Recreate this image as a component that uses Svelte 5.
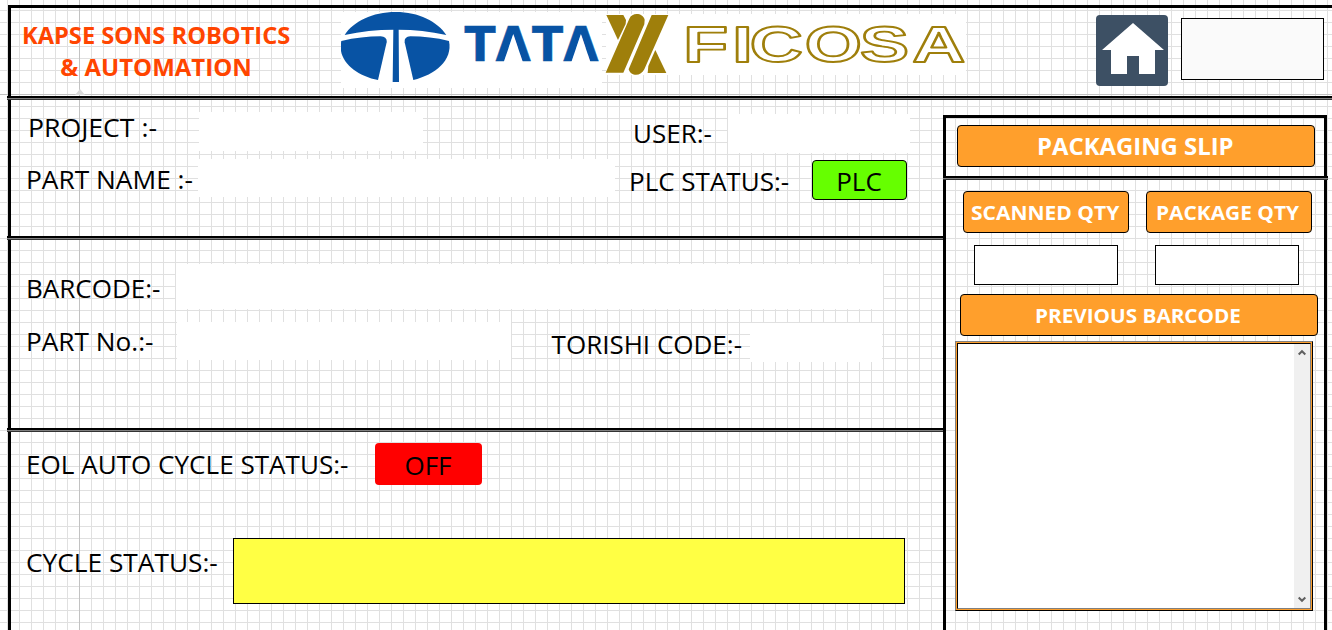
<script>
  // Scales a label horizontally so it takes the width set by the panel design.
  function fit(node, width) {
    const natural = node.offsetWidth;
    node.style.transform = `scaleX(${width / natural})`;
    node.style.marginRight = `${width - natural}px`;
  }
</script>

{#snippet label(text, width)}
  <span class="label" use:fit={width}>{text}</span>
{/snippet}

<main class="screen">
  <header class="header">
    <div class="company">
      <div><span class="name" use:fit={268}>KAPSE SONS ROBOTICS</span></div>
      <div><span class="name" use:fit={192}>&amp; AUTOMATION</span></div>
      <i class="caret"></i>
    </div>
    <svg class="tata" width="261" height="76" viewBox="341 12 261 76">
      <rect x="341" y="12" width="261" height="76" fill="#fff" />
      <g fill="#0853a4" transform="translate(330 0) scale(.33333)">
        <path d="M44 105C70 64 128 36 197 36S322 64 349 105Q276 89 206 89L207 246H188L190 89Q116 89 44 105Z" />
        <path d="M34 123Q95 109 152 109Q172 110 170 127L144 240C78 227 20 181 34 123Z" />
        <path d="M357 123Q299 109 241 109Q222 110 224 127L250 240C315 224 369 181 357 123Z" />
      </g>
      <text class="tata-word" transform="translate(464.6 61) scale(.95 1)" x="0 32.6 70.9 103.8" y="0">TATA</text>
      <path d="M513.3 34L523 62.5H503.6ZM580.9 34L590.6 62.5H571.2Z" fill="#fff" />
    </svg>
    <svg class="ficosa" width="361" height="61" viewBox="605 14 361 61">
      <rect x="606" y="14" width="360" height="61" fill="#fff" />
      <g fill="#9f7f0b" transform="translate(330 0) scale(.33333)">
        <path d="M829 45H880L888 60L887 72L864 120Z" />
        <path d="M827 218L898 56C906 36 939 38 944 59L943 73L880 218Z" />
        <path d="M896 208L965 45H1015L943 208C934 229 903 231 896 208Z" />
        <path d="M976 150L1009 219H953L955 198Z" />
      </g>
      <text class="ficosa-word" transform="translate(684 62) scale(1.47 1)" x="-.5 32.8 44.8 82.2 119.8 155.2" y="0">FICOSA</text>
    </svg>
    <button class="home" aria-label="Home">
      <svg width="72" height="71" viewBox="0 0 72 71">
        <path d="M37 8L68 35H59V59H43V41H31V59H15V35H6Z" fill="#fff" />
      </svg>
    </button>
    <div class="display"></div>
  </header>
  <div class="rule"></div>

  <div class="body">
    <div class="left">
      <section class="project">
        <div class="rows">
          <div class="row r-project">{@render label('PROJECT :-', 129)}<div class="field"></div></div>
          <div class="row r-part">{@render label('PART NAME :-', 167)}<div class="field"></div></div>
        </div>
        <div class="rows status">
          <div class="row r-user">{@render label('USER:-', 79)}<div class="field"></div></div>
          <div class="row r-plc">{@render label('PLC STATUS:-', 160)}<div class="badge plc">{@render label('PLC', 46)}</div></div>
        </div>
      </section>
      <div class="rule"></div>
      <section class="barcode">
        <div class="row r-barcode">{@render label('BARCODE:-', 134)}<div class="field"></div></div>
        <div class="row r-number">
          {@render label('PART No.:-', 127)}<div class="field"></div>
          <div class="torishi">{@render label('TORISHI CODE:-', 190)}</div>
          <div class="field code"></div>
        </div>
      </section>
      <div class="rule"></div>
      <section class="cycle">
        <div class="row r-eol">{@render label('EOL AUTO CYCLE STATUS:-', 323)}<div class="badge off">{@render label('OFF', 47)}</div></div>
        <div class="row r-cycle">{@render label('CYCLE STATUS:-', 192)}<div class="bar"></div></div>
      </section>
    </div>

    <aside class="panel">
      <div class="slip"><button class="orange big"><span use:fit={197}>PACKAGING SLIP</span></button></div>
      <div class="rule"></div>
      <div class="pair">
        <button class="orange"><span use:fit={148}>SCANNED QTY</span></button>
        <button class="orange"><span use:fit={143}>PACKAGE QTY</span></button>
      </div>
      <div class="counts"><div class="count"></div><div class="count"></div></div>
      <button class="orange previous"><span use:fit={206}>PREVIOUS BARCODE</span></button>
      <div class="list-outer"><div class="list-mid"><div class="list">
        <div class="scroll">
          <svg width="16" height="16"><path d="M4.7 9.5L8 6.2L11.3 9.5" /></svg>
          <svg width="16" height="16"><path d="M4.7 6.5L8 9.8L11.3 6.5" /></svg>
        </div>
      </div></div></div>
    </aside>
  </div>
</main>

<style>
  :global(body) { margin: 0; overflow: hidden; }
  * { box-sizing: border-box; }
  .screen {
    width: 1332px;
    height: 630px;
    padding: 5px 0 0 8px;
    overflow: hidden;
    font-family: "Open Sans", "Noto Sans", sans-serif;
    color: #000;
    background:
      linear-gradient(#c2c2c2, #c2c2c2) 79px 0 / 1px 100% no-repeat,
      linear-gradient(#c2c2c2, #c2c2c2) 0 94px / 100% 1px no-repeat,
      linear-gradient(to right, #e0e0e0 1px, transparent 1px) 7px 0 / 12px 12px,
      linear-gradient(#e0e0e0 1px, transparent 1px) 0 10px / 12px 12px,
      #fff;
  }
  .header {
    display: flex;
    align-items: flex-start;
    height: 91px;
    border-top: 3px solid #000;
    border-left: 3px solid #000;
  }
  .rule {
    height: 4px;
    margin-left: -4px;
    background: linear-gradient(#000 2px, #808080 2px, #808080 3px, #333 3px);
  }
  .header + .rule { margin-left: -1px; }
  .company {
    position: relative;
    width: 290px;
    margin-right: 40px;
    padding-top: 11px;
    color: #ff4500;
    text-align: center;
    font-size: 24px;
    font-weight: 700;
    line-height: 32px;
    white-space: nowrap;
  }
  .company > div { display: flex; justify-content: center; }
  .name, .label, .orange span { display: inline-block; flex: none; transform-origin: 0 50%; white-space: nowrap; }
  .caret {
    position: absolute;
    left: 64px;
    top: 81px;
    border: 5px solid transparent;
    border-top: 0;
    border-bottom: 6px solid #dadada;
  }
  svg { display: block; flex: none; }
  .tata { margin-top: 4px; }
  .tata-word { font: 700 48px "DejaVu Sans", sans-serif; fill: #0853a4; stroke: #0853a4; stroke-width: .5px; }
  .ficosa { margin: 6px 0 0 3px; }
  .ficosa-word { font: 700 50px "Liberation Sans", Arial, sans-serif; fill: #fff; stroke: #9f7f0b; stroke-width: 1.9px; stroke-linejoin: round; }
  .home {
    width: 72px;
    height: 71px;
    margin: 7px 13px 0 130px;
    padding: 0;
    border: 0;
    border-radius: 4px;
    background: #3d5064;
  }
  .display { width: 143px; height: 62px; margin-top: 10px; border: 1px solid #000; background: #fafafa; }

  .body { display: flex; height: 530px; }
  .left { width: 935px; border-left: 3px solid #000; }
  .left > .rule { margin-right: -1px; }
  .label { font-size: 26px; line-height: 30px; }
  .row { display: flex; align-items: flex-start; }
  .field { margin-left: auto; background: #fff; }

  .project { display: flex; justify-content: space-between; height: 136px; }
  .rows { padding-top: 12px; }
  .r-project { width: 412px; height: 39px; padding-left: 17px; }
  .r-project .field { width: 224px; height: 39px; }
  .r-part { width: 604px; margin-top: 8px; padding-left: 15px; }
  .r-part .label { margin-top: 5px; }
  .r-part .field { width: 417px; height: 38px; }
  .status { padding: 14px 36px 0 0; }
  .r-user { width: 278px; padding-left: 4px; }
  .r-user .label { margin-top: 4px; }
  .r-user .field { width: 182px; height: 39px; margin-right: -3px; }
  .r-plc { width: 278px; margin-top: 7px; justify-content: space-between; }
  .r-plc > .label { margin-top: 6px; }
  .badge { display: flex; justify-content: center; border-radius: 4px; padding-top: 5px; }
  .plc { width: 95px; height: 40px; padding-right: 1px; border: 1px solid #000; background: #6f0; }
  .off { width: 107px; height: 42px; margin-left: auto; padding: 7px 1px 0 0; background: #f00; }

  .barcode { height: 188px; padding: 24px 0 0 15px; }
  .r-barcode { width: 857px; }
  .r-barcode .label { margin-top: 9px; }
  .r-barcode .field { width: 707px; height: 45px; }
  .r-number { width: 856px; margin-top: 13px; }
  .r-number > .label { margin-top: 4px; }
  .r-number .field { width: 334px; height: 38px; }
  .torishi { display: flex; margin: 7px 8px 0 41px; }
  .r-number .field.code { width: 132px; height: 39px; margin: 1px 0 0; }

  .cycle { padding: 11px 0 0 15px; }
  .r-eol { width: 456px; height: 42px; }
  .r-eol > .label { margin-top: 6px; }
  .r-cycle { width: 879px; margin-top: 53px; }
  .r-cycle .label { margin-top: 9px; }
  .bar { width: 672px; height: 66px; margin-left: auto; border: 1px solid #000; background: #ffff44; }

  .panel { width: 384px; height: 515px; margin-top: 15px; border: 3px solid #000; border-bottom: 0; }
  .panel > .rule { margin: 0 -4px 0 -3px; }
  .slip { height: 58px; padding: 7px 0 0 11px; }
  .orange {
    display: flex;
    justify-content: center;
    align-items: center;
    width: 166px;
    height: 42px;
    padding: 1px 2px 0 0;
    border: 1px solid #000;
    border-radius: 4px;
    background: #ff9f2c;
    color: #fff;
    font: 700 20px/30px "Open Sans", "Noto Sans", sans-serif;
  }
  .orange.big { width: 358px; padding-bottom: 1px; font-size: 23.5px; }
  .pair { display: flex; gap: 17px; padding: 11px 0 0 17px; }
  .counts { display: flex; gap: 37px; padding: 12px 0 9px 28px; }
  .count { width: 144px; height: 40px; border: 1px solid #000; background: #fff; }
  .previous { width: 358px; margin-left: 14px; }
  .list-outer {
    width: 358px;
    height: 270px;
    margin: 5px 0 0 9px;
    border: 1px solid;
    border-color: #808080 #000 #000 #808080;
  }
  .list-mid { height: 100%; border: 1px solid #ff9f2c; }
  .list {
    display: flex;
    justify-content: flex-end;
    height: 100%;
    border: 1px solid;
    border-color: #000 #808080 #808080 #000;
    background: #fff;
  }
  .scroll { display: flex; flex-direction: column; justify-content: space-between; width: 16px; padding: 1px 0; background: #f0f0f0; }
  .scroll path { fill: none; stroke: #606060; stroke-width: 2; }
</style>
